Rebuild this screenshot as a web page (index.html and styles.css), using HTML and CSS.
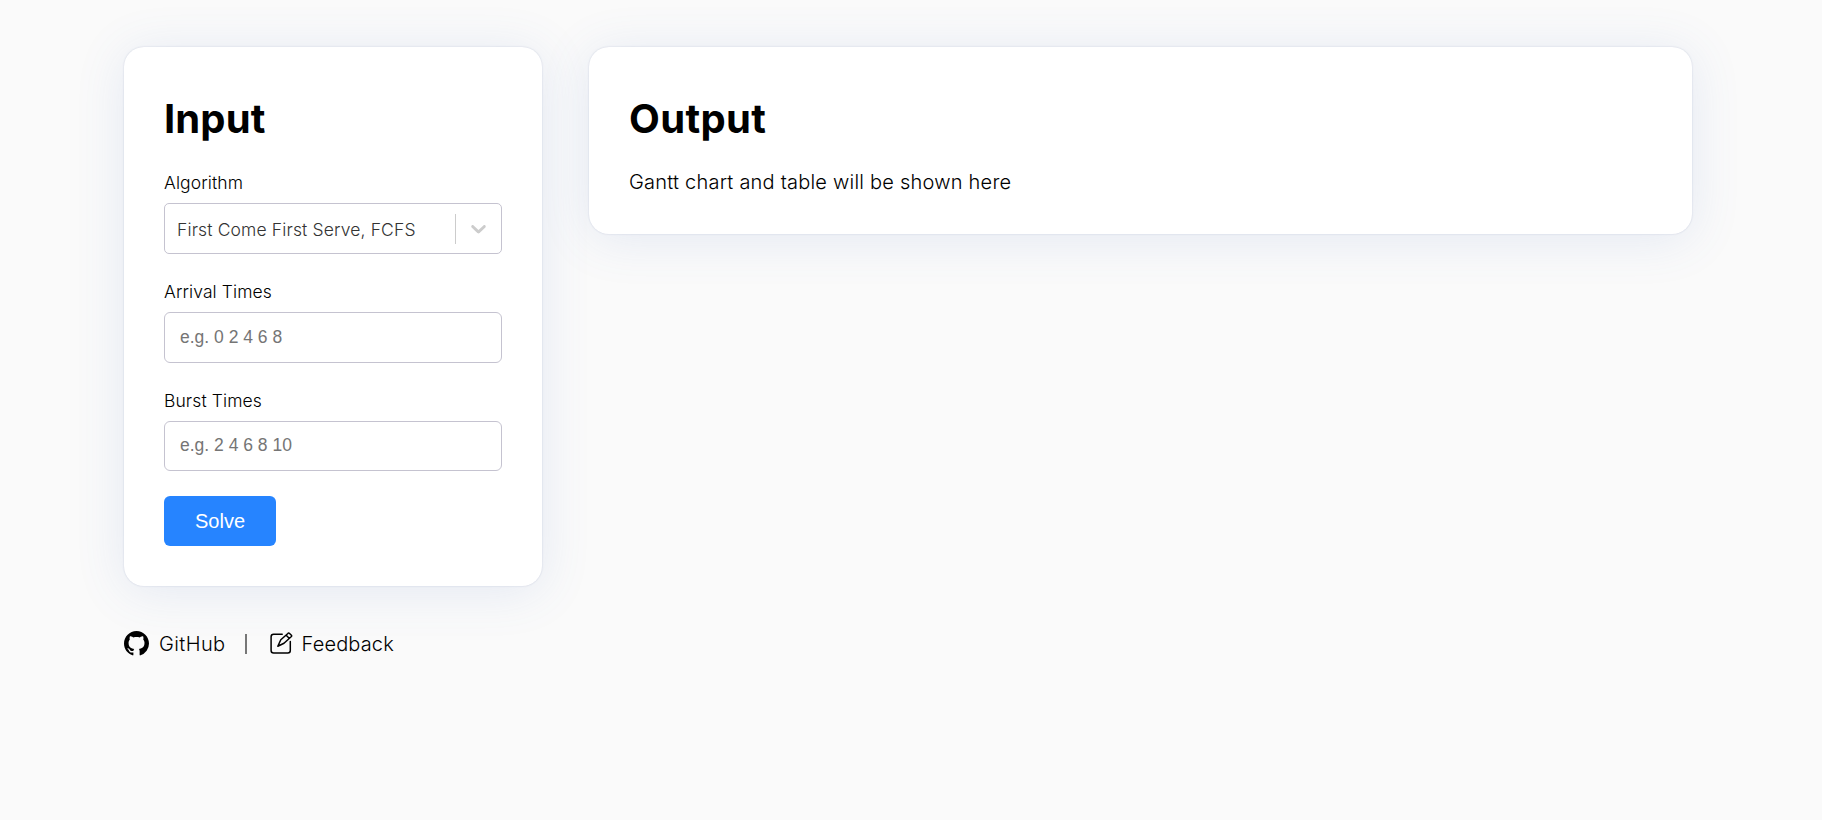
FILE: index.html
```
<!DOCTYPE html>
<html lang="en">
<head>
<meta charset="utf-8">
<title>Process Scheduling Solver</title>
<link rel="stylesheet" href="styles.css">
</head>
<body>
<main class="layout">
  <section class="card card-input">
    <h1 class="title">Input</h1>
    <form class="form">
      <div class="field">
        <span class="label">Algorithm</span>
        <div class="select" tabindex="0">
          <span class="select-value">First Come First Serve, FCFS</span>
          <span class="select-separator"></span>
          <svg class="select-arrow" width="25" height="25" viewBox="0 0 20 20"><path fill="currentColor" d="M4.516 7.548c0.436-0.446 1.043-0.481 1.576 0l3.908 3.747 3.908-3.747c0.533-0.481 1.141-0.446 1.574 0 0.436 0.445 0.408 1.197 0 1.615-0.406 0.418-4.695 4.502-4.695 4.502-0.217 0.223-0.502 0.335-0.787 0.335s-0.57-0.112-0.789-0.335c0 0-4.287-4.084-4.695-4.502s-0.436-1.17 0-1.615z"/></svg>
        </div>
      </div>
      <div class="field">
        <label class="label" for="arrival">Arrival Times</label>
        <input class="text-input" id="arrival" type="text" placeholder="e.g. 0 2 4 6 8">
      </div>
      <div class="field field-last">
        <label class="label" for="burst">Burst Times</label>
        <input class="text-input" id="burst" type="text" placeholder="e.g. 2 4 6 8 10">
      </div>
      <button class="solve" type="button">Solve</button>
    </form>
  </section>
  <section class="card card-output">
    <h1 class="title title-output">Output</h1>
    <p class="message">Gantt chart and table will be shown here</p>
  </section>
</main>
<footer class="footer">
  <a class="link link-github" href="#">
    <svg width="25" height="25" viewBox="0 0 16 16"><path fill="currentColor" d="M8 0C3.58 0 0 3.58 0 8c0 3.54 2.29 6.53 5.47 7.59.4.07.55-.17.55-.38 0-.19-.01-.82-.01-1.49-2.01.37-2.53-.49-2.69-.94-.09-.23-.48-.94-.82-1.13-.28-.15-.68-.52-.01-.53.63-.01 1.08.58 1.23.82.72 1.21 1.87.87 2.33.66.07-.52.28-.87.51-1.07-1.78-.2-3.64-.89-3.64-3.95 0-.87.31-1.59.82-2.15-.08-.2-.36-1.02.08-2.12 0 0 .67-.21 2.2.82.64-.18 1.32-.27 2-.27s1.36.09 2 .27c1.53-1.04 2.2-.82 2.2-.82.44 1.1.16 1.92.08 2.12.51.56.82 1.27.82 2.15 0 3.07-1.87 3.75-3.65 3.95.29.25.54.73.54 1.48 0 1.07-.01 1.93-.01 2.2 0 .21.15.46.55.38A8.01 8.01 0 0 0 16 8c0-4.42-3.58-8-8-8z"/></svg>
    <span>GitHub</span>
  </a>
  <span class="divider"></span>
  <a class="link link-feedback" href="#">
    <svg width="23" height="23" viewBox="0 0 23 23" fill="none" stroke="currentColor" stroke-width="1.5" stroke-linejoin="round" stroke-linecap="round"><path d="M12.2 2.2H3.6Q1.1 2.2 1.1 4.7V18.6Q1.1 21.1 3.6 21.1H17.8Q20.3 21.1 20.3 18.6V9.5"/><path d="M7.8 14.2L10.8 7.8L18.2 1.2Q18.8 .7 19.3 1.2L21.4 3.3Q22 3.9 21.4 4.5L14 11.2ZM16.4 3.4L19.2 6.3"/></svg>
    <span>Feedback</span>
  </a>
</footer>
</body>
</html>
```
FILE: styles.css
```
* {
  box-sizing: border-box;
}

body {
  margin: 0;
  padding: 47px 130px 0 124px;
  background: #fafafa;
  color: #000;
  font-family: Inter, "Liberation Sans", sans-serif;
  font-size: 20px;
  font-weight: 300;
}

.layout {
  display: grid;
  grid-template-columns: 418px 1fr;
  align-items: start;
  gap: 47px;
}

.card {
  padding: 40px;
  background: #fff;
  border-radius: 20px;
  box-shadow: 0 0 2px rgba(50, 60, 120, 0.2), 0 5px 50px rgba(80, 115, 190, 0.13);
}

.card-input {
  height: 539px;
}

.card-output {
  height: 187px;
}

.title {
  margin: 7px 0 0;
  font-size: 40px;
  font-weight: 700;
  line-height: 50px;
  letter-spacing: 0.1px;
}

.title-output {
  letter-spacing: 0.35px;
}

.form {
  margin-top: 25px;
}

.field {
  margin-bottom: 25px;
}

.label {
  display: block;
  height: 34px;
  padding-top: 2px;
  font-size: 17.5px;
  line-height: 24px;
  font-weight: 350;
  letter-spacing: 0.1px;
}

.select {
  display: flex;
  align-items: center;
  height: 51px;
  padding-left: 12px;
  border: 1px solid #c5c3d0;
  border-radius: 5px;
  color: #333;
  font-size: 17.5px;
  letter-spacing: 0.14px;
}

.select-value {
  flex: 1;
  padding-top: 1px;
  white-space: nowrap;
}

.select-separator {
  width: 1px;
  height: 30px;
  background: #ccc;
}

.select-arrow {
  margin: 0 10px;
  color: #ccc;
}

.field + .field .label {
  height: 33px;
  padding-top: 1px;
}

.text-input {
  display: block;
  width: 100%;
  height: 51px;
  padding: 0 15px;
  border: 1px solid #c5c3d0;
  border-radius: 6px;
  background: #fff;
  font: 400 17.5px "Liberation Sans", Arial, sans-serif;
}

.field-last .text-input {
  height: 50px;
  padding-bottom: 2px;
}

.text-input::placeholder {
  color: #757575;
}

.solve {
  display: block;
  width: 112px;
  height: 50px;
  padding: 0;
  border: 0;
  border-radius: 6px;
  background: #2684ff;
  color: #fff;
  font: 400 20px "Liberation Sans", Arial, sans-serif;
}

.message {
  margin: 24px 0 0;
  line-height: 28px;
  letter-spacing: 0.22px;
}

.footer {
  display: flex;
  align-items: center;
  height: 28px;
  margin-top: 44px;
  letter-spacing: 0.25px;
}

.link {
  display: flex;
  align-items: center;
  gap: 10px;
  color: inherit;
  text-decoration: none;
}

.link svg {
  margin-bottom: 1px;
}

.link-github {
  letter-spacing: 0.4px;
}

.link-feedback {
  gap: 9px;
  letter-spacing: 0.15px;
}

.divider {
  width: 2px;
  height: 20px;
  margin: 0 23px 0 19px;
  background: #777;
}
```
